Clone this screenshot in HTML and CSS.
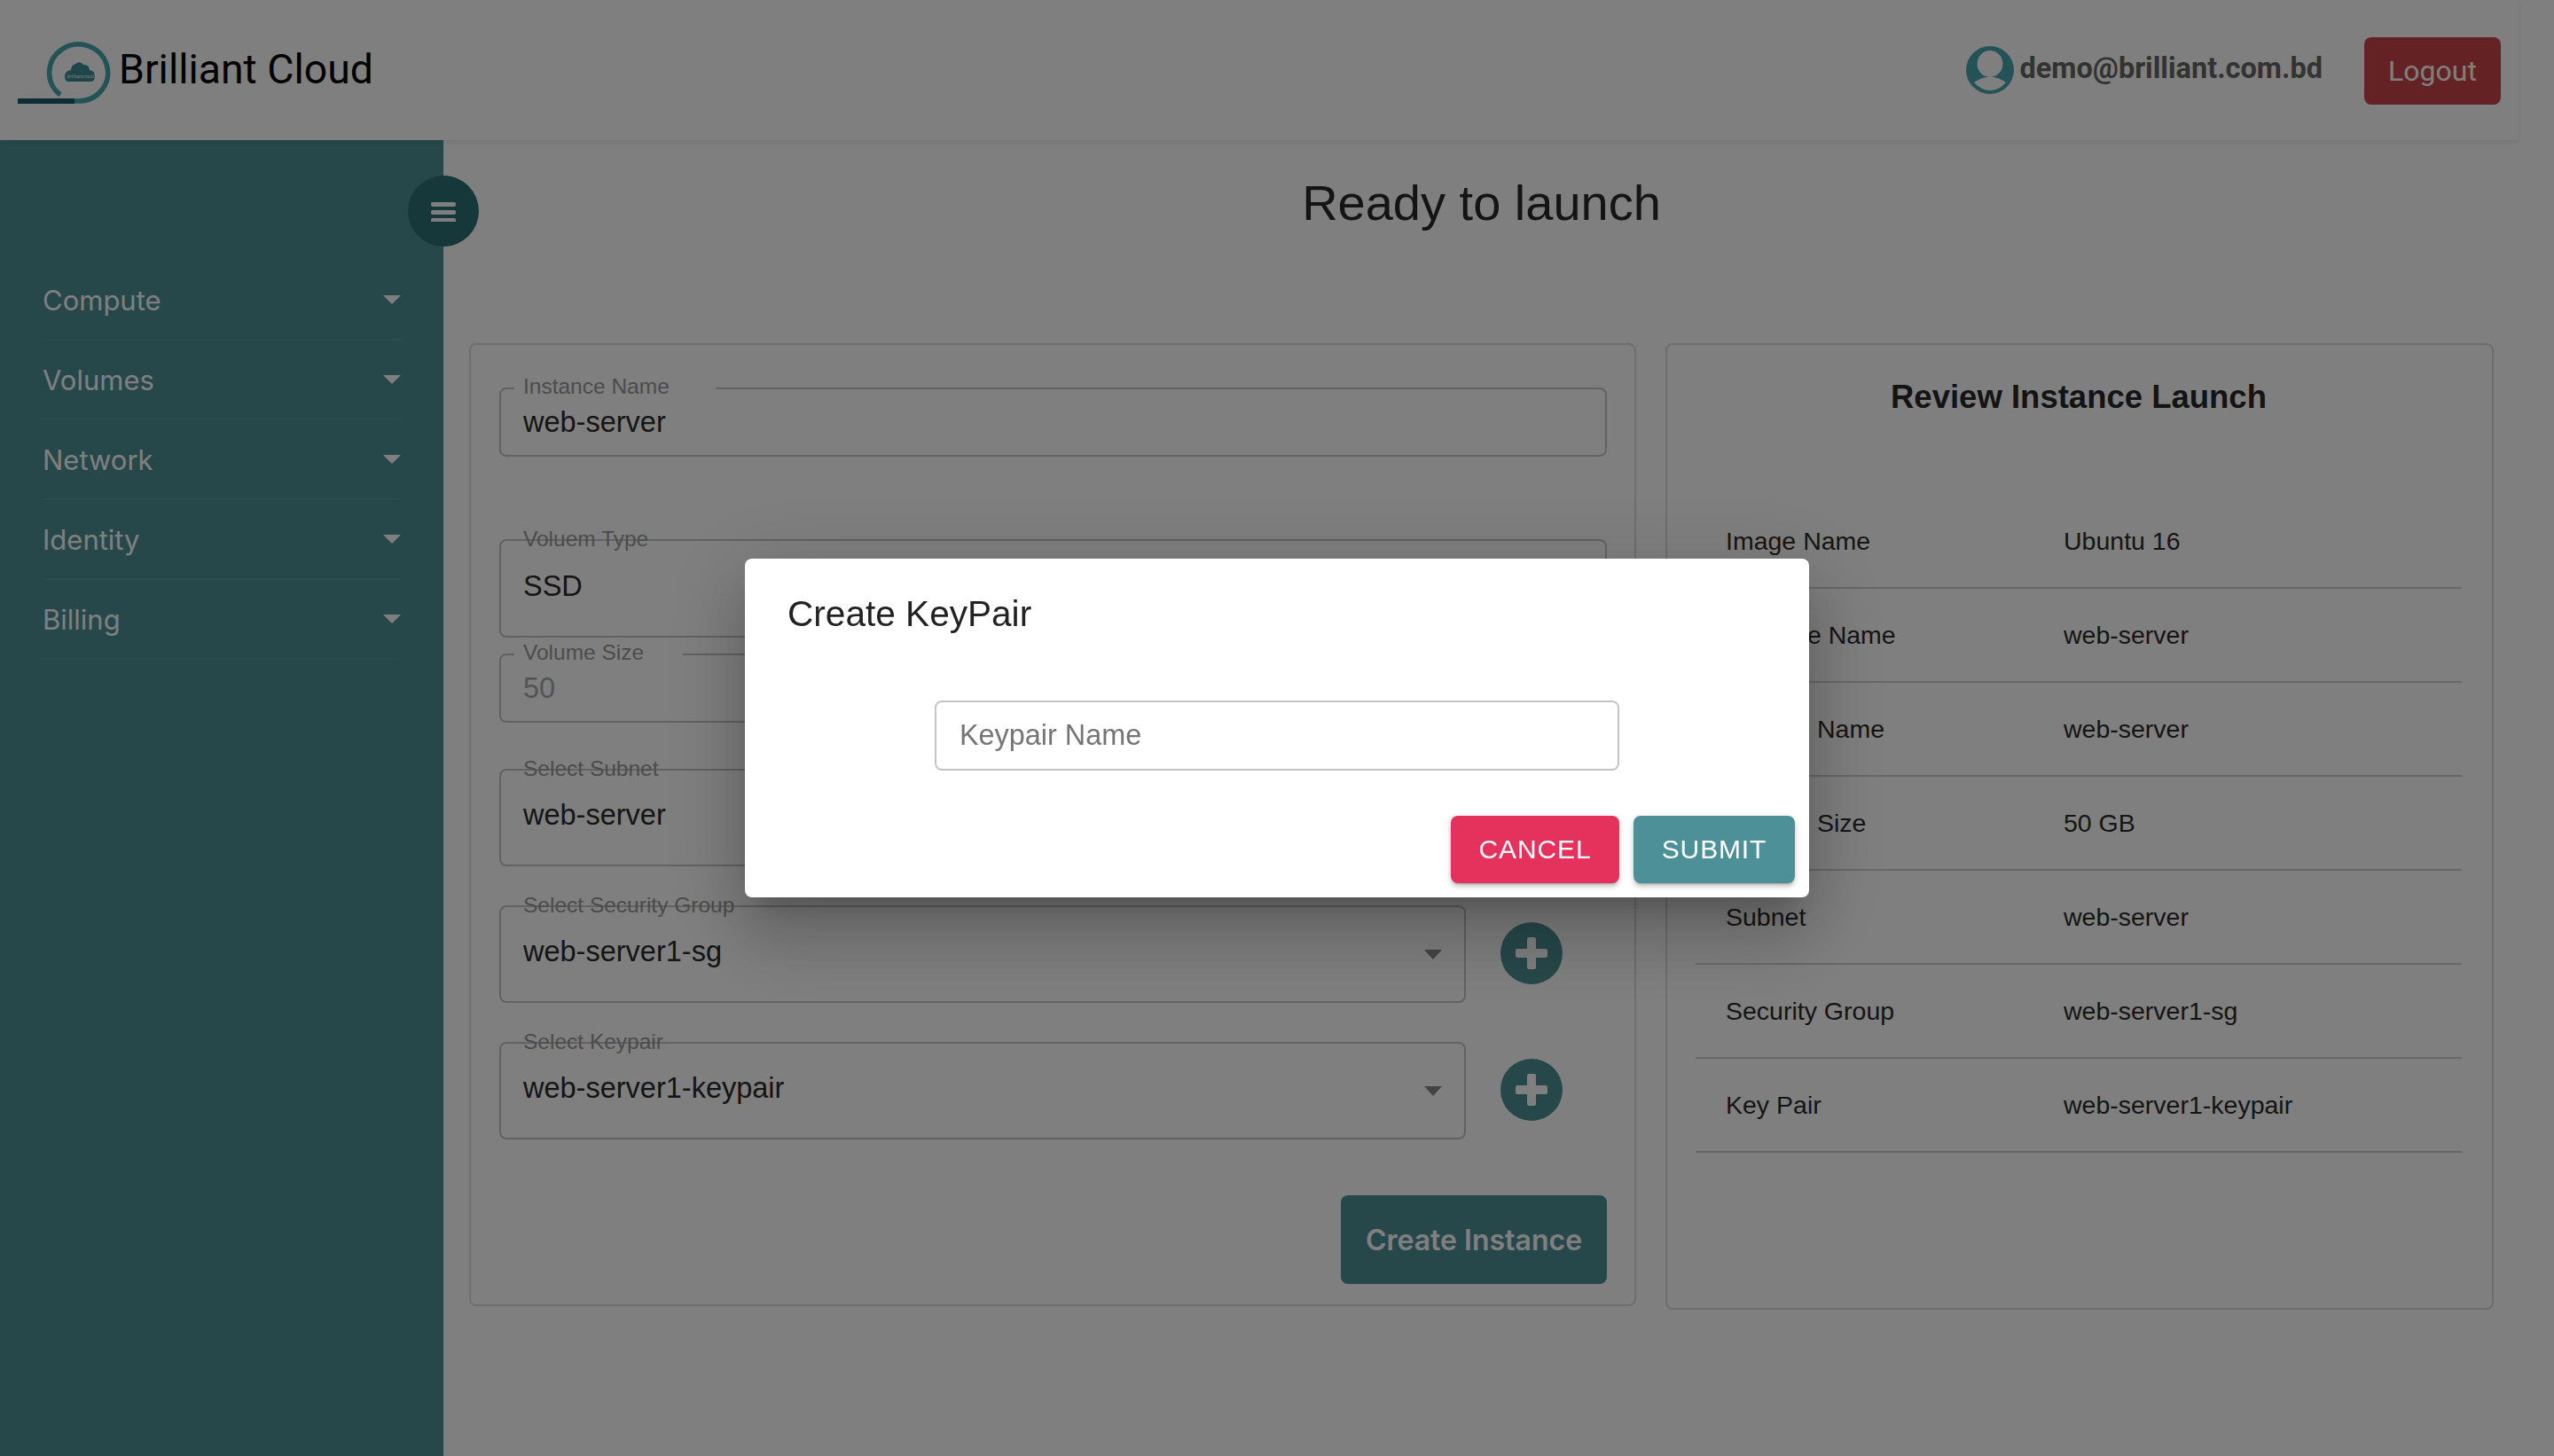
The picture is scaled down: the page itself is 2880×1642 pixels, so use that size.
FILE: index.html
```html
<!DOCTYPE html>
<html>
<head>
  <meta charset="UTF-8">
  <title>Brilliant Cloud - Ready to launch</title>
  <link rel="stylesheet" href="styles.css">
</head>
<body>
  <header class="topbar">
    <div class="brand">
      <svg class="brand-logo" width="106" height="72" viewBox="0 0 106 72">
        <path d="M48 62 A33 32 0 1 1 69 69 H60" fill="none" stroke="#46a5ae" stroke-width="5.500"/>
        <path d="M0 69 H64" fill="none" stroke="#1d5c6c" stroke-width="6"/>
        <path d="M57 47 H82 Q87 47 87 41 Q87 35 81 34 Q80 27 74 28 Q70 23 65 27 Q60 29 60 34 Q53 35 53 41 Q53 47 57 47 Z" fill="#3f8f96"/>
        <text x="56" y="43" class="brand-logo-text">brilliantcloud</text>
      </svg>
      <span class="brand-name">Brilliant Cloud</span>
    </div>
    <div class="account">
      <svg width="54" height="54" viewBox="0 0 54 54">
        <circle cx="27" cy="27" r="27" fill="#46a5ae"/>
        <ellipse cx="27" cy="20" rx="14.500" ry="15" fill="#fff"/>
        <path d="M9 41 Q27 28 45 41 Q37 50 27 50 Q17 50 9 41 Z" fill="#fff"/>
      </svg>
      <span class="account-email">demo@brilliant.com.bd</span>
      <button class="logout">Logout</button>
    </div>
  </header>

  <div class="layout">
    <aside class="sidebar">
      <button class="sidebar-toggle">
        <svg width="28" height="24" viewBox="0 0 28 24">
          <rect x="0" y="2" width="28" height="5" rx="2" fill="#fff"/>
          <rect x="0" y="11" width="28" height="5" rx="2" fill="#fff"/>
          <rect x="0" y="20" width="28" height="5" rx="2" fill="#fff"/>
        </svg>
      </button>
      <nav class="nav">
        <div class="nav-item"><span>Compute</span><i class="nav-caret"></i></div>
        <div class="nav-item"><span>Volumes</span><i class="nav-caret"></i></div>
        <div class="nav-item"><span>Network</span><i class="nav-caret"></i></div>
        <div class="nav-item"><span>Identity</span><i class="nav-caret"></i></div>
        <div class="nav-item"><span>Billing</span><i class="nav-caret"></i></div>
      </nav>
    </aside>

    <main class="content">
      <h1 class="page-title">Ready to launch</h1>
      <div class="cards">
        <section class="card form-card">
          <div class="field field-name">
            <label class="field-label notch notch-name">Instance Name</label>
            <span class="field-value">web-server</span>
          </div>
          <div class="field field-select field-full voltype">
            <label class="field-label">Voluem Type</label>
            <span class="field-value">SSD</span>
          </div>
          <div class="field field-name field-half volsize">
            <label class="field-label notch notch-size">Volume Size</label>
            <span class="field-value disabled">50</span>
          </div>
          <div class="select-row subnet">
            <div class="field field-select">
              <label class="field-label">Select Subnet</label>
              <span class="field-value">web-server</span>
              <i class="select-caret"></i>
            </div>
            <button class="add-btn"><svg width="70" height="70" viewBox="0 0 70 70"><circle cx="35" cy="35" r="35" fill="#4e9095"/><rect x="30" y="17" width="10" height="36" rx="2" fill="#fff"/><rect x="17" y="30" width="36" height="10" rx="2" fill="#fff"/></svg></button>
          </div>
          <div class="select-row">
            <div class="field field-select">
              <label class="field-label">Select Security Group</label>
              <span class="field-value">web-server1-sg</span>
              <i class="select-caret"></i>
            </div>
            <button class="add-btn"><svg width="70" height="70" viewBox="0 0 70 70"><circle cx="35" cy="35" r="35" fill="#4e9095"/><rect x="30" y="17" width="10" height="36" rx="2" fill="#fff"/><rect x="17" y="30" width="36" height="10" rx="2" fill="#fff"/></svg></button>
          </div>
          <div class="select-row">
            <div class="field field-select">
              <label class="field-label">Select Keypair</label>
              <span class="field-value">web-server1-keypair</span>
              <i class="select-caret"></i>
            </div>
            <button class="add-btn"><svg width="70" height="70" viewBox="0 0 70 70"><circle cx="35" cy="35" r="35" fill="#4e9095"/><rect x="30" y="17" width="10" height="36" rx="2" fill="#fff"/><rect x="17" y="30" width="36" height="10" rx="2" fill="#fff"/></svg></button>
          </div>
          <div class="form-actions">
            <button class="create-btn">Create Instance</button>
          </div>
        </section>

        <section class="card review-card">
          <h2 class="review-title">Review Instance Launch</h2>
          <div class="review-row"><span>Image Name</span><span>Ubuntu 16</span></div>
          <div class="review-row"><span>Instance Name</span><span>web-server</span></div>
          <div class="review-row"><span>Volume Name</span><span>web-server</span></div>
          <div class="review-row"><span>Volume Size</span><span>50 GB</span></div>
          <div class="review-row"><span>Subnet</span><span>web-server</span></div>
          <div class="review-row"><span>Security Group</span><span>web-server1-sg</span></div>
          <div class="review-row"><span>Key Pair</span><span>web-server1-keypair</span></div>
        </section>
      </div>
    </main>
  </div>

  <div class="backdrop">
    <div class="modal">
      <h3 class="modal-title">Create KeyPair</h3>
      <input class="modal-input" type="text" placeholder="Keypair Name">
      <div class="modal-actions">
        <button class="modal-btn cancel">CANCEL</button>
        <button class="modal-btn submit">SUBMIT</button>
      </div>
    </div>
  </div>
</body>
</html>
```
FILE: styles.css
```css
* {
  box-sizing: border-box;
}
body {
  margin: 0;
  height: 1642px;
  overflow: hidden;
  background: #fff;
  font-family: "Liberation Sans", Arial, sans-serif;
  color: #2a2a2a;
  display: flex;
  flex-direction: column;
}
button {
  border: none;
  font-family: inherit;
  padding: 0;
}

/* top bar */
.topbar {
  width: 2840px;
  height: 158px;
  flex: none;
  display: flex;
  align-items: center;
  justify-content: space-between;
  padding: 0 20px;
  background: #fff;
  box-shadow: 0 2px 6px rgba(0, 0, 0, 0.1);
  position: relative;
  z-index: 1;
}
.brand {
  display: flex;
  align-items: center;
}
.brand-logo {
  margin-top: 4px;
}
.brand-logo-text {
  font-family: "Open Sans", sans-serif;
  font-size: 5px;
  fill: #fff;
}
.brand-name {
  margin-left: 8px;
  margin-top: -2px;
  font-family: Roboto, sans-serif;
  font-size: 46.4px;
  color: #000;
}
.account {
  display: flex;
  align-items: center;
}
.account-email {
  margin-left: 6px;
  margin-top: -5px;
  font-family: Roboto, sans-serif;
  font-weight: 700;
  font-size: 32.5px;
  color: #666;
}
.logout {
  margin-left: 47px;
  margin-top: 1px;
  width: 154px;
  height: 76px;
  border-radius: 8px;
  background: #ca4449;
  color: #fff;
  font-family: Roboto, sans-serif;
  font-size: 32px;
}

/* sidebar */
.layout {
  flex: 1;
  display: flex;
}
.sidebar {
  width: 500px;
  flex: none;
  padding: 136px 48px 0;
  background: #4e9095;
  position: relative;
}
.sidebar-toggle {
  position: absolute;
  top: 40px;
  right: -40px;
  width: 80px;
  height: 80px;
  border-radius: 50%;
  background: #2e7076;
  display: flex;
  align-items: center;
  justify-content: center;
}
.nav-item {
  height: 90px;
  display: flex;
  align-items: center;
  justify-content: space-between;
  border-bottom: 2px solid rgba(255, 255, 255, 0.08);
  font-family: Inter, sans-serif;
  font-size: 31px;
  color: #fff;
}
.nav-caret {
  width: 0;
  height: 0;
  border-left: 10px solid transparent;
  border-right: 10px solid transparent;
  border-top: 10px solid #fff;
}

/* main */
.content {
  flex: 1;
  padding: 28px 68px 0 29px;
}
.page-title {
  margin: 0 0 117px;
  font-size: 56px;
  font-weight: 400;
  line-height: 86px;
  height: 84px;
  text-align: center;
  color: #282828;
}
.cards {
  display: grid;
  grid-template-columns: 1316px 934px;
  column-gap: 33px;
  align-items: start;
}
.card {
  border: 2px solid #dcdcdc;
  border-radius: 8px;
}
.form-card {
  padding: 48px 31px 23px 32px;
}

/* form fields */
.field {
  position: relative;
  border: 2px solid #c4c4c4;
  border-radius: 8px;
  padding-left: 25px;
  display: flex;
  align-items: center;
}
.field-name {
  height: 78px;
}
.field-select {
  height: 110px;
  padding-bottom: 6px;
}
.voltype {
  height: 111px;
  margin-top: 93px;
}
.volsize {
  margin-top: 18px;
}
.field-label {
  position: absolute;
  top: -16px;
  left: 25px;
  font-size: 24.5px;
  line-height: 28px;
  color: #989898;
}
.notch {
  top: -17px;
  left: 15px;
  padding-left: 10px;
  background: #fff;
}
.notch-name {
  padding-right: 52px;
}
.notch-size {
  padding-right: 44px;
}
.field-value {
  font-size: 32.5px;
  line-height: 40px;
  color: #2a2a2a;
}
.field-name .field-value {
  margin-top: -1px;
}
.field-value.disabled {
  color: #a8a8a8;
}
.select-row {
  margin-top: 44px;
  display: flex;
  align-items: center;
}
.select-row.subnet {
  margin-top: 52px;
}
.select-row .field {
  width: 1090px;
}
.select-caret {
  position: absolute;
  right: 25px;
  top: 48px;
  width: 0;
  height: 0;
  border-left: 10px solid transparent;
  border-right: 10px solid transparent;
  border-top: 11px solid #888;
}
.add-btn {
  margin-left: 39px;
  margin-top: -2px;
  width: 70px;
  height: 70px;
  background: none;
  display: block;
}
.add-btn svg {
  display: block;
}
.form-actions {
  margin-top: 63px;
  display: flex;
  justify-content: flex-end;
}
.create-btn {
  width: 300px;
  height: 100px;
  border-radius: 8px;
  background: #4e9095;
  color: #fff;
  font-family: Inter, sans-serif;
  font-weight: 600;
  font-size: 32px;
}

/* review */
.review-card {
  padding: 37px 34px 175px 32px;
}
.review-title {
  margin: 0 0 88px;
  font-size: 36.5px;
  line-height: 44px;
  text-align: center;
  color: #282828;
}
.review-row {
  height: 106px;
  padding-left: 34px;
  display: grid;
  grid-template-columns: 381px 1fr;
  align-items: center;
  border-bottom: 2px solid #d0d0d0;
  font-size: 28.5px;
  color: #2a2a2a;
}

/* modal */
.backdrop {
  position: fixed;
  inset: 0;
  z-index: 10;
  background: rgba(0, 0, 0, 0.5);
  display: flex;
  align-items: center;
  justify-content: center;
}
.modal {
  width: 1200px;
  height: 382px;
  padding: 38px 16px 16px 48px;
  border-radius: 8px;
  background: #fff;
  box-shadow: 0 22px 30px -14px rgba(0, 0, 0, 0.2), 0 48px 76px 6px rgba(0, 0, 0, 0.14), 0 18px 92px 16px rgba(0, 0, 0, 0.12);
}
.modal-title {
  margin: 0;
  font-size: 40.6px;
  font-weight: 400;
  line-height: 48px;
  color: #222;
}
.modal-input {
  display: block;
  width: 772px;
  height: 79px;
  margin: 74px 0 0 166px;
  padding: 0 26px;
  border: 2px solid #c4c4c4;
  border-radius: 8px;
  font-family: inherit;
  font-size: 32.4px;
  outline: none;
}
.modal-input::placeholder {
  color: #757575;
  opacity: 1;
}
.modal-actions {
  margin-top: 51px;
  display: flex;
  justify-content: flex-end;
  gap: 16px;
}
.modal-btn {
  height: 76px;
  border-radius: 8px;
  color: #fff;
  font-size: 30px;
  letter-spacing: 0.86px;
  box-shadow: 0 3px 2px -2px rgba(0, 0, 0, 0.2), 0 4px 4px 0 rgba(0, 0, 0, 0.14), 0 2px 10px 0 rgba(0, 0, 0, 0.12);
}
.modal-btn.cancel {
  width: 190px;
  background: #e5325d;
}
.modal-btn.submit {
  width: 182px;
  background: #4d9097;
}
```
